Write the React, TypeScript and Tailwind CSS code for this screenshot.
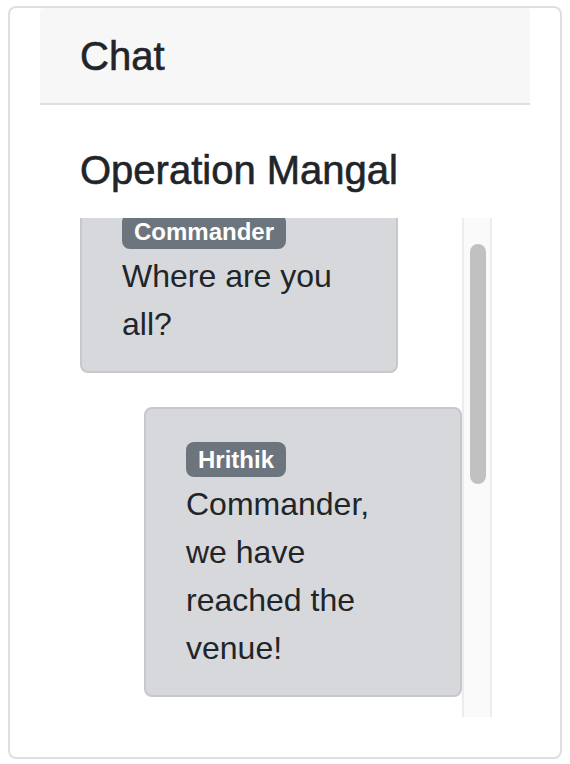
import React, { useLayoutEffect, useRef } from 'react';

interface Message {
  id: number;
  author: string;
  text: string;
  mine?: boolean;
}

const messages: Message[] = [
  { id: 1, author: 'Commander', text: 'Where are you all?' },
  { id: 2, author: 'Hrithik', text: 'Commander, we have reached the venue!', mine: true },
];

const Bubble: React.FC<Message> = ({ author, text, mine }) => (
  <div
    className={`w-[318px] border-2 border-[#c6c8ca] rounded-[8px] bg-[#d6d8db] pt-[33px] pb-[23px] pl-[40px] pr-[50px] ${mine ? 'self-end' : 'self-start'}`}
  >
    <span className="inline-block align-top bg-[#6c757d] text-white font-bold text-[24px] leading-[25px] px-[12px] py-[5px] rounded-[8px]">
      {author}
    </span>
    <p className="pt-[3px] text-[32px] leading-[48px] text-[#212529]">{text}</p>
  </div>
);

export default function App() {
  const listRef = useRef<HTMLDivElement>(null);

  useLayoutEffect(() => {
    if (listRef.current) listRef.current.scrollTop = 53;
  }, []);

  return (
    <div className="min-h-screen bg-white pt-[6px] px-[8px] font-['Liberation_Sans',Arial,sans-serif] text-[#212529]">
      <section className="h-[753px] border-2 border-[#dfdfdf] rounded-[8px] px-[30px]">
        <header className="h-[97px] flex items-center pl-[40px] bg-[#f7f7f7] border-b-2 border-[#dfdfdf] rounded-t-[4px]">
          <h4 className="text-[40px] leading-[48px] font-medium [-webkit-text-stroke:0.6px_#212529]">Chat</h4>
        </header>

        <div className="pl-[40px] pr-[38px]">
          <h2 className="mt-[41px] mb-[24px] text-[40px] leading-[48px] font-medium [-webkit-text-stroke:0.6px_#212529]">
            Operation Mangal
          </h2>

          <div className="flex h-[499px]">
            <div ref={listRef} className="flex-1 overflow-y-auto [scrollbar-width:none]">
              <div className="flex flex-col gap-[34px] pt-[14px] pb-[505px]">
                {messages.map(m => (
                  <Bubble key={m.id} {...m} />
                ))}
              </div>
            </div>

            {/* scrollbar, as the mac browser draws it */}
            <div className="w-[30px] shrink-0 bg-[#fafafa] border-x-2 border-[#ececec] pl-[6px]">
              <div className="mt-[26px] w-[16px] h-[240px] rounded-full bg-[#c1c1c1]" />
            </div>
          </div>
        </div>
      </section>
    </div>
  );
}
